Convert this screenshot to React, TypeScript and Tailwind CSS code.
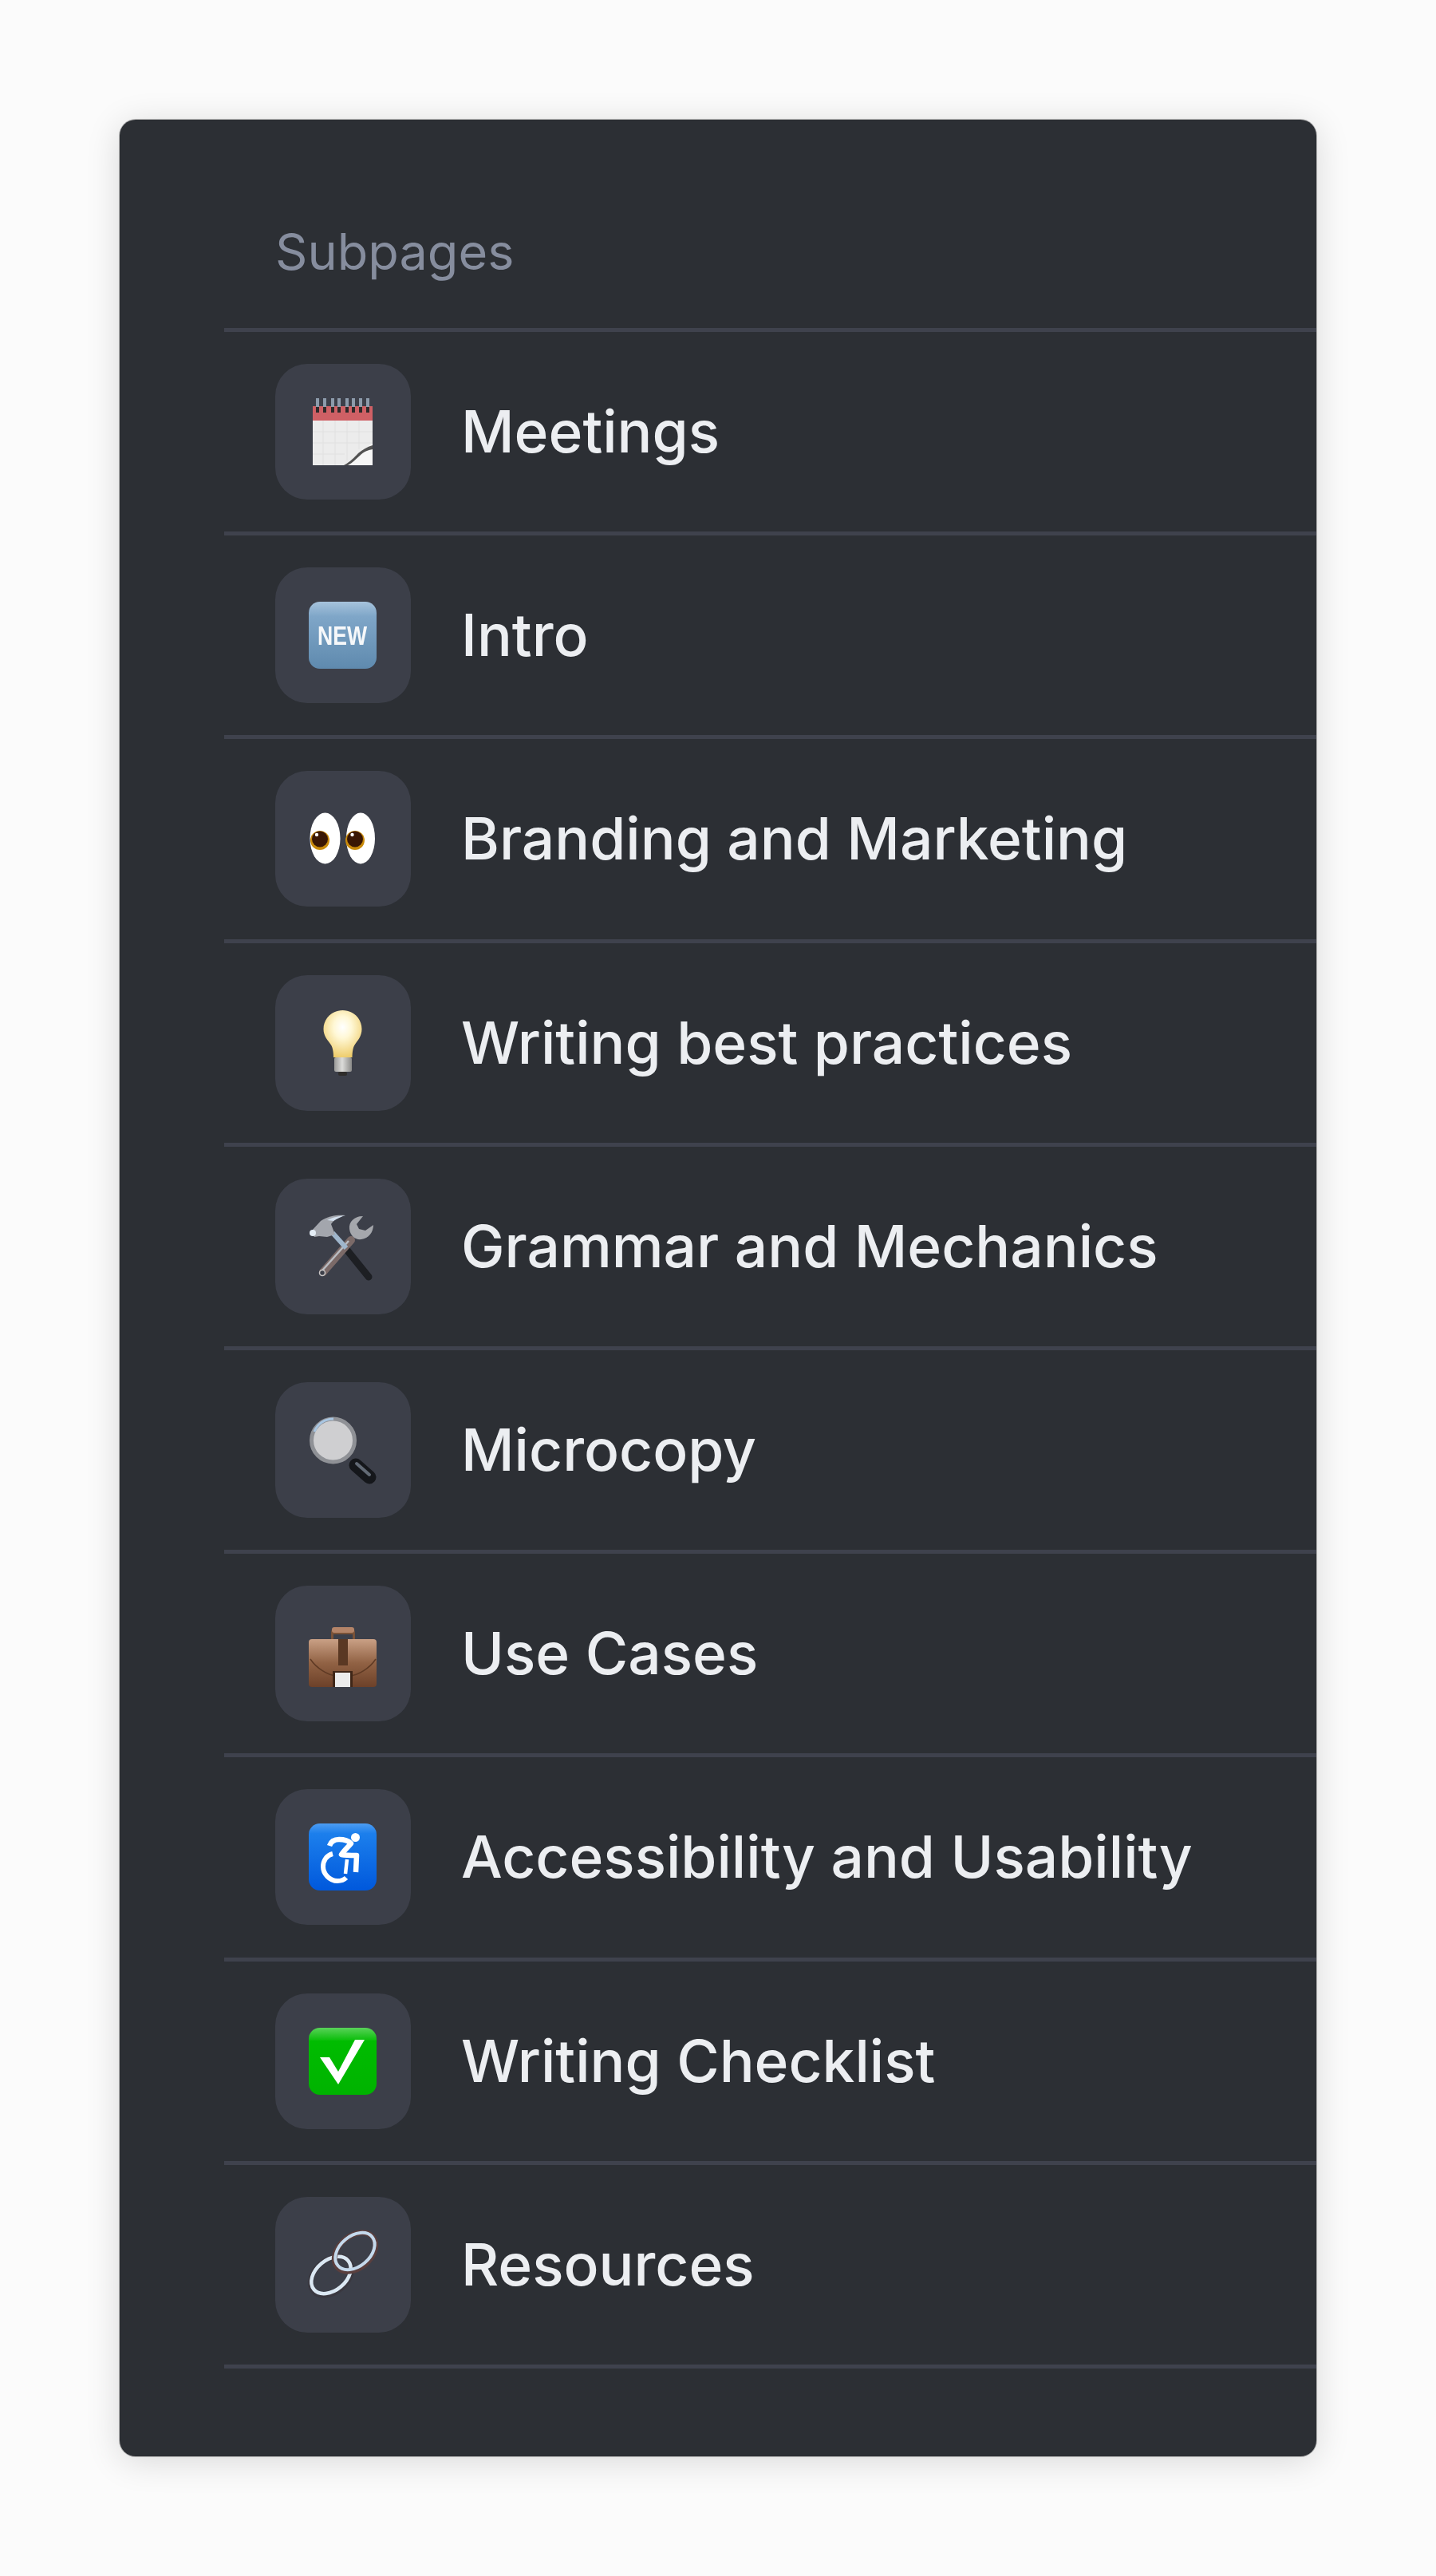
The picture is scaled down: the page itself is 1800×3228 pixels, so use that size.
import type { ReactNode } from "react";

function Emoji({ children }: { children: ReactNode }) {
  return (
    <svg viewBox="0 0 170 170" className="h-[170px] w-[170px] blur-[0.7px]">
      {children}
    </svg>
  );
}

function Calendar() {
  const rings = [53, 62, 72, 80, 90, 98, 107, 116];
  return (
    <Emoji>
      <rect x="47" y="53" width="75" height="18" fill="#cf6065" />
      <rect x="47" y="71" width="75" height="56" fill="#ececec" />
      <path d="M47 85h75M47 99h75M47 113h40M60 71v56M75 71v56M90 71v50M105 71v36" stroke="#e0e0e0" strokeWidth="1" />
      <path d="M122 100v27H88c8-3 12-9 17-14 5-5 10-9 17-13z" fill="#f6f6f6" />
      <path d="M122 102c-7 2-13 6-18 10-5 5-9 10-18 15h5c6-3 10-8 15-12 5-5 10-7 16-8z" fill="#525252" />
      {rings.map((x) => (
        <g key={x}>
          <rect x={x - 2} y="43" width="4" height="11" fill="#8d9bab" />
          <rect x={x - 2} y="54" width="4" height="7" fill="#2f2a2a" />
        </g>
      ))}
    </Emoji>
  );
}

function NewBadge() {
  return (
    <Emoji>
      <defs>
        <linearGradient id="newBg" x1="0" y1="0" x2="0" y2="1">
          <stop offset="0" stopColor="#a6c3dc" />
          <stop offset="0.22" stopColor="#7fa6c8" />
          <stop offset="1" stopColor="#5f8aae" />
        </linearGradient>
      </defs>
      <rect x="42" y="43" width="85" height="84" rx="14" fill="url(#newBg)" />
      <text
        x="53"
        y="97"
        fontFamily="'Liberation Sans', sans-serif"
        fontWeight="700"
        fontSize="33"
        textLength="62"
        lengthAdjust="spacingAndGlyphs"
        fill="#f6f8fa"
      >
        NEW
      </text>
    </Emoji>
  );
}

function Eyes() {
  return (
    <Emoji>
      <ellipse cx="62.500" cy="84.500" rx="19" ry="32" fill="#fff" />
      <ellipse cx="107" cy="84.500" rx="18" ry="32" fill="#fff" />
      <circle cx="56" cy="87" r="12" fill="#c98a0a" />
      <circle cx="56" cy="85.500" r="10" fill="#3a1704" />
      <circle cx="52" cy="80" r="2.200" fill="#fff" />
      <circle cx="100" cy="87" r="12" fill="#c98a0a" />
      <circle cx="100" cy="85.500" r="10" fill="#3a1704" />
      <circle cx="96.500" cy="80" r="2.200" fill="#fff" />
    </Emoji>
  );
}

function Bulb() {
  return (
    <Emoji>
      <defs>
        <radialGradient id="bulbGlow" cx="0.5" cy="0.36" r="0.66">
          <stop offset="0" stopColor="#ffffff" />
          <stop offset="0.35" stopColor="#fff8d6" />
          <stop offset="1" stopColor="#eecb68" />
        </radialGradient>
        <linearGradient id="bulbBase" x1="0" y1="0" x2="1" y2="0">
          <stop offset="0" stopColor="#9a9a98" />
          <stop offset="0.45" stopColor="#dcdcda" />
          <stop offset="1" stopColor="#8a8a88" />
        </linearGradient>
      </defs>
      <path d="M84.500 44c13.500 0 24 10.500 24 23.500 0 9-5 14-9 20-2 3-3 9-3 15.500H73c0-6.500-1-12.500-3-15.500-4-6-9.500-11-9.500-20C60.500 54.500 71 44 84.500 44z" fill="url(#bulbGlow)" />
      <rect x="74" y="103" width="22" height="18" rx="2" fill="url(#bulbBase)" />
      <rect x="79" y="121" width="11" height="5" rx="2" fill="#2f2d2b" />
    </Emoji>
  );
}

function Tools() {
  return (
    <Emoji>
      <path d="M117 123 88 87" stroke="#1d1f23" strokeWidth="9" strokeLinecap="round" />
      <path d="M60 117 95 77" stroke="#7b6a68" strokeWidth="10" strokeLinecap="round" />
      <path d="M59 115 92 78" stroke="#b9bcc2" strokeWidth="2.500" />
      <circle cx="59" cy="118" r="3.500" fill="#3c3f49" stroke="#c9c6c6" strokeWidth="1.500" />
      <path d="M72 68 89 87" stroke="#9fb6cc" strokeWidth="6" />
      <path d="M110 47c-11 0-18 7-17 16 1 9 8 14 15 13 9-1 15-9 15-18l-10 7-8-2-3-6z" fill="#a5a7ac" />
      <path d="M45 66l12-13c9-6 20-8 31-7-8 2-15 6-18 11l5 13-10 3-10-1-6 1z" fill="#a3a6ad" />
      <path d="M65 52c8-4 15-5 23-6-6 2-11 4-15 7z" fill="#d3e0ee" />
      <circle cx="47" cy="68" r="4" fill="#e4edf6" />
    </Emoji>
  );
}

function Magnifier() {
  return (
    <Emoji>
      <path d="M101 104 118 119" stroke="#15171b" strokeWidth="17" strokeLinecap="round" />
      <path d="M102 102 118 116" stroke="#626a75" strokeWidth="4" strokeLinecap="round" />
      <circle cx="72.500" cy="73" r="27" fill="#cfcfd1" stroke="#8f9196" strokeWidth="5" />
      <path d="M49 62c4-10 13-16 24-16" fill="none" stroke="#a9c6e2" strokeWidth="3" />
    </Emoji>
  );
}

function Briefcase() {
  return (
    <Emoji>
      <defs>
        <linearGradient id="caseBody" x1="0" y1="0" x2="0" y2="1">
          <stop offset="0" stopColor="#c9a085" />
          <stop offset="0.5" stopColor="#916244" />
          <stop offset="1" stopColor="#6d4129" />
        </linearGradient>
      </defs>
      <path d="M70 67v-8c0-4 3-7 7-7h16c4 0 7 3 7 7v8h-3v-6H73v6z" fill="#7a5238" />
      <rect x="71" y="52" width="28" height="7" rx="3" fill="#b48468" />
      <rect x="42" y="67" width="85" height="60" rx="4" fill="url(#caseBody)" />
      <path d="M44 92c8 12 22 20 32 21h18c10-1 24-9 32-21" fill="none" stroke="#5f3a24" strokeWidth="1.500" />
      <rect x="79" y="67" width="12" height="33" fill="#5a3823" />
      <rect x="72" y="107" width="25" height="20" fill="#3f2617" />
      <rect x="75" y="109" width="19" height="18" fill="#ececec" />
    </Emoji>
  );
}

function Wheelchair() {
  return (
    <Emoji>
      <defs>
        <linearGradient id="a11yBg" x1="0" y1="0" x2="0" y2="1">
          <stop offset="0" stopColor="#4d9df2" />
          <stop offset="0.15" stopColor="#1c7fec" />
          <stop offset="1" stopColor="#0058dc" />
        </linearGradient>
      </defs>
      <rect x="42" y="43" width="85" height="84" rx="14" fill="url(#a11yBg)" />
      <circle cx="100.500" cy="60.500" r="5.500" fill="#fff" />
      <path d="M68 71c2-6 7-8 12-8 6 0 12 2 15 5-3 4-9 9-12 14 5 1 11 1 19 1l-1 21" fill="none" stroke="#fff" strokeWidth="6.500" strokeLinejoin="round" />
      <path d="M90 88 88 106" stroke="#fff" strokeWidth="4.500" />
      <path d="M72 81c-8 2-12 9-12 16 0 9 8 18 18 18 4 0 8-1 11-4" fill="none" stroke="#fff" strokeWidth="6" />
    </Emoji>
  );
}

function Check() {
  return (
    <Emoji>
      <defs>
        <linearGradient id="checkBg" x1="0" y1="0" x2="0" y2="1">
          <stop offset="0" stopColor="#59d259" />
          <stop offset="0.17" stopColor="#12c012" />
          <stop offset="0.2" stopColor="#00bc00" />
          <stop offset="1" stopColor="#00b300" />
        </linearGradient>
      </defs>
      <rect x="42" y="43" width="85" height="84" rx="14" fill="url(#checkBg)" />
      <polygon points="56,80 68,80 79,98 100,58 112,58 79,114" fill="#fff" />
    </Emoji>
  );
}

function LinkRings() {
  return (
    <Emoji>
      <ellipse cx="70" cy="99" rx="29" ry="20" transform="rotate(-40 70 99)" fill="none" stroke="#3a3840" strokeWidth="7" />
      <ellipse cx="70" cy="98" rx="28" ry="19" transform="rotate(-40 70 98)" fill="none" stroke="#dbe8f3" strokeWidth="4.500" />
      <ellipse cx="100" cy="69" rx="29" ry="20" transform="rotate(-40 100 69)" fill="none" stroke="#5a3f3e" strokeWidth="7" />
      <ellipse cx="100" cy="68" rx="28" ry="19" transform="rotate(-40 100 68)" fill="none" stroke="#c4d9ec" strokeWidth="4" />
    </Emoji>
  );
}

const pages = [
  { title: "Meetings", icon: <Calendar /> },
  { title: "Intro", icon: <NewBadge /> },
  { title: "Branding and Marketing", icon: <Eyes /> },
  { title: "Writing best practices", icon: <Bulb /> },
  { title: "Grammar and Mechanics", icon: <Tools /> },
  { title: "Microcopy", icon: <Magnifier /> },
  { title: "Use Cases", icon: <Briefcase /> },
  { title: "Accessibility and Usability", icon: <Wheelchair /> },
  { title: "Writing Checklist", icon: <Check /> },
  { title: "Resources", icon: <LinkRings /> },
];

export default function App() {
  return (
    <div className="min-h-[3228px] bg-[#fbfbfb] pl-[150px] pt-[150px] font-['Inter',sans-serif]">
      <div className="w-[1500px] rounded-[20px] bg-[#2c2f34] pb-[110px] pl-[131px] pt-[110px] shadow-[0_0_0_1px_rgba(0,0,0,0.25),0_6px_44px_rgba(0,0,0,0.14)]">
        <div className="border-b-[5px] border-[#3f424d] pb-[40px] pl-[64px] text-[63px] leading-[111px] text-[#868d9e]">
          Subpages
        </div>
        {pages.map((page) => (
          <div
            key={page.title}
            className="flex items-center gap-[63px] border-b-[5px] border-[#3f424d] py-[40.1px] pl-[64px]"
          >
            <div className="h-[170px] w-[170px] shrink-0 rounded-[40px] bg-[#3c3f49]">{page.icon}</div>
            <span className="text-[73px] font-medium leading-[100px] text-[#eceef1]">{page.title}</span>
          </div>
        ))}
      </div>
    </div>
  );
}
